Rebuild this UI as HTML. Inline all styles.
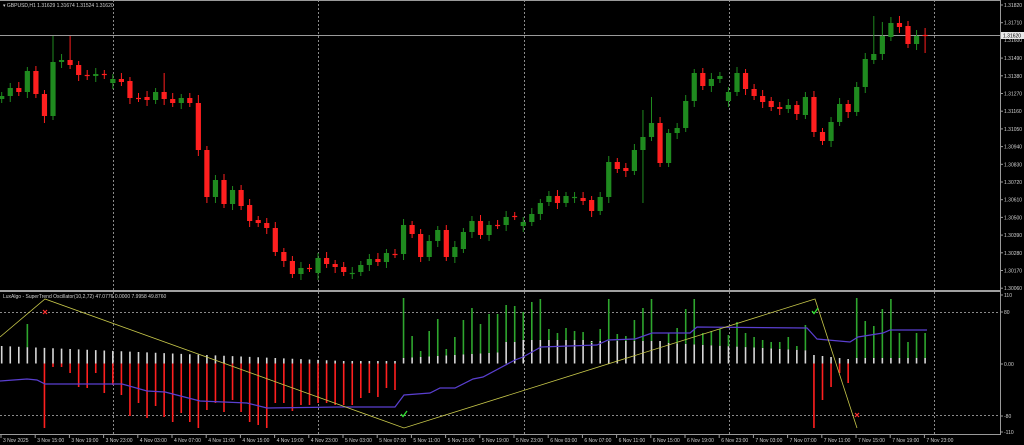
<!DOCTYPE html>
<html><head><meta charset="utf-8"><style>
html,body{margin:0;padding:0;background:#000;width:1024px;height:445px;overflow:hidden}
svg{display:block}
text{font-family:"Liberation Sans",sans-serif;font-size:5.5px;fill:#d0d0d0}
</style></head><body>
<svg id="s" width="1024" height="445" viewBox="0 0 1024 445" xmlns="http://www.w3.org/2000/svg">
<rect width="1024" height="445" fill="#000"/>
</svg>
<script>
var s=document.getElementById('s'),h='';
function L(x1,y1,x2,y2,c,w,d){h+='<line x1="'+x1+'" y1="'+y1+'" x2="'+x2+'" y2="'+y2+'" stroke="'+c+'" stroke-width="'+(w||1)+'"'+(d?' stroke-dasharray="'+d+'"':'')+'/>';}
function R(x,y,w,hh,c){h+='<rect x="'+x+'" y="'+y+'" width="'+w+'" height="'+Math.max(hh,1)+'" fill="'+c+'"/>';}
function T(x,y,t,a){h+='<text x="'+x+'" y="'+y+'"'+(a||'')+'>'+t+'</text>';}
var G='#1f8a1f',RD='#ff1f1f';
[113,318,524,729,934].forEach(function(x){L(x+.5,0,x+.5,434,'#8a8a8a',1,'2,2');});
L(0,312.5,1000,312.5,'#8a8a8a',1,'2,2');L(0,415.5,1000,415.5,'#8a8a8a',1,'2,2');
L(0,35.5,1000,35.5,'#9a9a9a',1);
var C=[[99,96],[96,88],[88,92],[92,71],[71,94],[94,116],[116,62],[62,60],[60,65],[65,75],[75,76],[76,74],[74,75],[83,79],[79,82],[81,98],[98,98],[97,100],[100,92],[92,99],[99,103],[103,98],[98,103],[103,150],[150,197],[197,180],[180,204],[204,190],[190,206],[205,221],[220,223],[223,228],[228,252],[252,261],[261,274],[274,268],[268,268],[273,258],[258,264],[264,267],[267,272],[273,273],[272,265],[265,259],[259,262],[262,253],[254,254],[254,225],[225,234],[234,257],[257,241],[241,230],[230,257],[257,247],[249,232],[232,221],[221,235],[235,225],[225,225],[225,217],[216,216],[226,222],[222,214],[214,203],[202,196],[196,203],[203,196],[197,197],[198,201],[200,211],[211,197],[197,162],[162,169],[168,171],[171,150],[150,137],[137,123],[123,163],[163,133],[133,128],[128,101],[101,73],[73,86],[86,79],[79,76],[101,92],[92,73],[73,89],[89,96],[96,102],[101,107],[107,109],[109,105],[105,114],[115,97],[97,132],[132,141],[141,122],[122,104],[104,112],[112,87],[87,59],[60,54],[54,36],[37,23],[23,27],[26,44],[44,36],[35,35]];
var HI={6:36,7:54,8:36,19:73,75:110,76:97,102:16,103:22,105:16,108:28,23:95,5:90},LO={5:123,75:203,108:53,24:203,35:280,37:280,49:262,77:167,95:137};
for(var i=0;i<C.length;i++){var x=1.7+i*8.55,o=C[i][0],c=C[i][1],t=Math.min(o,c),b=Math.max(o,c);
var col=(c<o)?G:(c>o?RD:(i%2?G:RD));
var hi=HI[i]||t-4-(i%3),lo=LO[i]||b+4+(i%2)*2;
L(x,hi,x,lo,col,1);
if(b-t<1.5){L(x-2.5,t+.5,x+2.5,t+.5,col,1.2);}else R(x-2.6,t,5.2,b-t,col);}
var Z=363.5,RB=[428,367,367,373,387,388,373,393,385,395,416,403,418,406,417,422,413,422,428,410,403,412,400,412,422,425,428,403,403,411,405,405,403,403,405,405,405,398,393,397,388,390];
var GT={3:324,47:298,48:336,49:351,50:331,51:319,52:349,53:337,54:320,55:308,56:324,57:314,58:314,59:305,60:306,61:312,62:302,63:299,64:329,65:333,66:328,67:331,68:332,69:342,70:329,71:299,72:334,73:336,74:320,75:308,76:299,78:333,79:328,80:309,81:299,82:333,83:331,84:329,85:335,86:322,87:333,88:337,89:340,90:342,91:342,92:337,93:346,94:325,100:298,101:321,102:326,103:309,104:299,105:333,106:342,107:333,108:333};
var RR={95:428,96:400,97:387,98:373,99:383};
for(var i=0;i<C.length;i++){var x=1.7+i*8.55,wt;
if(i<47){wt=346+Math.min(i,40)*0.375;}
else if(i<95){wt=358-(i-47)*0.5; if(i>=59)wt=342; if(i>=61&&i<69)wt=340; if(i>=69&&i<78)wt=341; if(i>=78)wt=343+(i-78)*0.45;}
else if(i<100){wt=355+(i-95);} else wt=358;
R(x-0.8,wt,1.6,Z-wt,'#d8d8d8');
if(i>=5&&i<47){var rb=RB[i-5];R(x-0.8,Z,1.6,rb-Z,RD);}
if(RR[i])R(x-0.8,Z,1.6,RR[i]-Z,RD);
if(GT[i])R(x-0.8,GT[i],1.6,wt-GT[i],'#2ea62e');}
var P=[[0,381],[27,379],[37,380],[45,384],[122,384],[147,391],[165,392],[200,401],[247,403],[267,408],[340,407],[395,407],[404,395],[430,393],[440,388],[455,388],[473,379],[483,377],[515,360],[523,357],[541,347],[597,345],[608,340],[635,339],[652,333],[690,333],[697,327],[807,328],[817,339],[850,342],[858,337],[883,333],[890,330],[927,330]];
h+='<polyline fill="none" stroke="#5a3fd0" stroke-width="1.2" points="'+P.map(function(p){return p.join(',')}).join(' ')+'"/>';
h+='<polyline fill="none" stroke="#c8c84a" stroke-width="0.8" points="0,337 45,299 404,428 815,299 857,428"/>';
// markers as paths
function X(cx,cy){h+='<path d="M'+(cx-2)+' '+(cy-2)+'L'+(cx+2)+' '+(cy+2)+'M'+(cx+2)+' '+(cy-2)+'L'+(cx-2)+' '+(cy+2)+'" stroke="#ff3030" stroke-width="1.2" fill="none"/>';}
function V(cx,cy){h+='<path d="M'+(cx-3)+' '+cy+'L'+(cx-1)+' '+(cy+2.5)+'L'+(cx+3)+' '+(cy-3)+'" stroke="#30e030" stroke-width="1.3" fill="none"/>';}
X(45,312);X(857,415);V(404,414);V(815,311);
R(0,0,1001,1,'#9a9a9a');R(0,290,1001,2,'#a0a0a0');R(1000,0,1,435,'#9a9a9a');R(0,434,1001,1,'#9a9a9a');
T(3,7,'▾ GBPUSD,H1  1.31629 1.31674 1.31524 1.31620',' style="font-size:5px"');
T(3,298,'LuxAlgo - SuperTrend Oscillator(10,2,72) 47.0776 0.0000 7.9958 49.8760',' style="font-size:5px"');
var PL=['1.31820','1.31710',null,'1.31490','1.31380','1.31270','1.31160','1.31050','1.30940','1.30830','1.30720','1.30610','1.30500','1.30390','1.30280','1.30170','1.30060'];
for(var k=0;k<PL.length;k++){var y=5+k*17.7;if(!PL[k])continue;L(1000,y,1003,y,'#9a9a9a',1);T(1004,y+2,PL[k],' style="font-size:5px"');}
T(1004,42,'1.31600',' style="font-size:5px"');
R(1001,32,23,7,'#e8e8e8');T(1003,37.5,'1.31620',' style="font-size:5px;fill:#000"');
[[295,'110'],[312,'80'],[364,'0.00'],[416,'-80'],[432,'-110']].forEach(function(a){L(1000,a[0],1003,a[0],'#9a9a9a',1);T(1004,a[0]+2,a[1],' style="font-size:5px"');});
var TL=['3 Nov 2025','3 Nov 15:00','3 Nov 19:00','3 Nov 23:00','4 Nov 03:00','4 Nov 07:00','4 Nov 11:00','4 Nov 15:00','4 Nov 19:00','4 Nov 23:00','5 Nov 03:00','5 Nov 07:00','5 Nov 11:00','5 Nov 15:00','5 Nov 19:00','5 Nov 23:00','6 Nov 03:00','6 Nov 07:00','6 Nov 11:00','6 Nov 15:00','6 Nov 19:00','6 Nov 23:00','7 Nov 03:00','7 Nov 07:00','7 Nov 11:00','7 Nov 15:00','7 Nov 19:00','7 Nov 23:00'];
for(var k=0;k<TL.length;k++){var x=1+k*34.2;L(x,434,x,438,'#9a9a9a',1);T(x+2,442,TL[k],' style="font-size:5px"');}
s.innerHTML+=h;
</script>
</body></html>
